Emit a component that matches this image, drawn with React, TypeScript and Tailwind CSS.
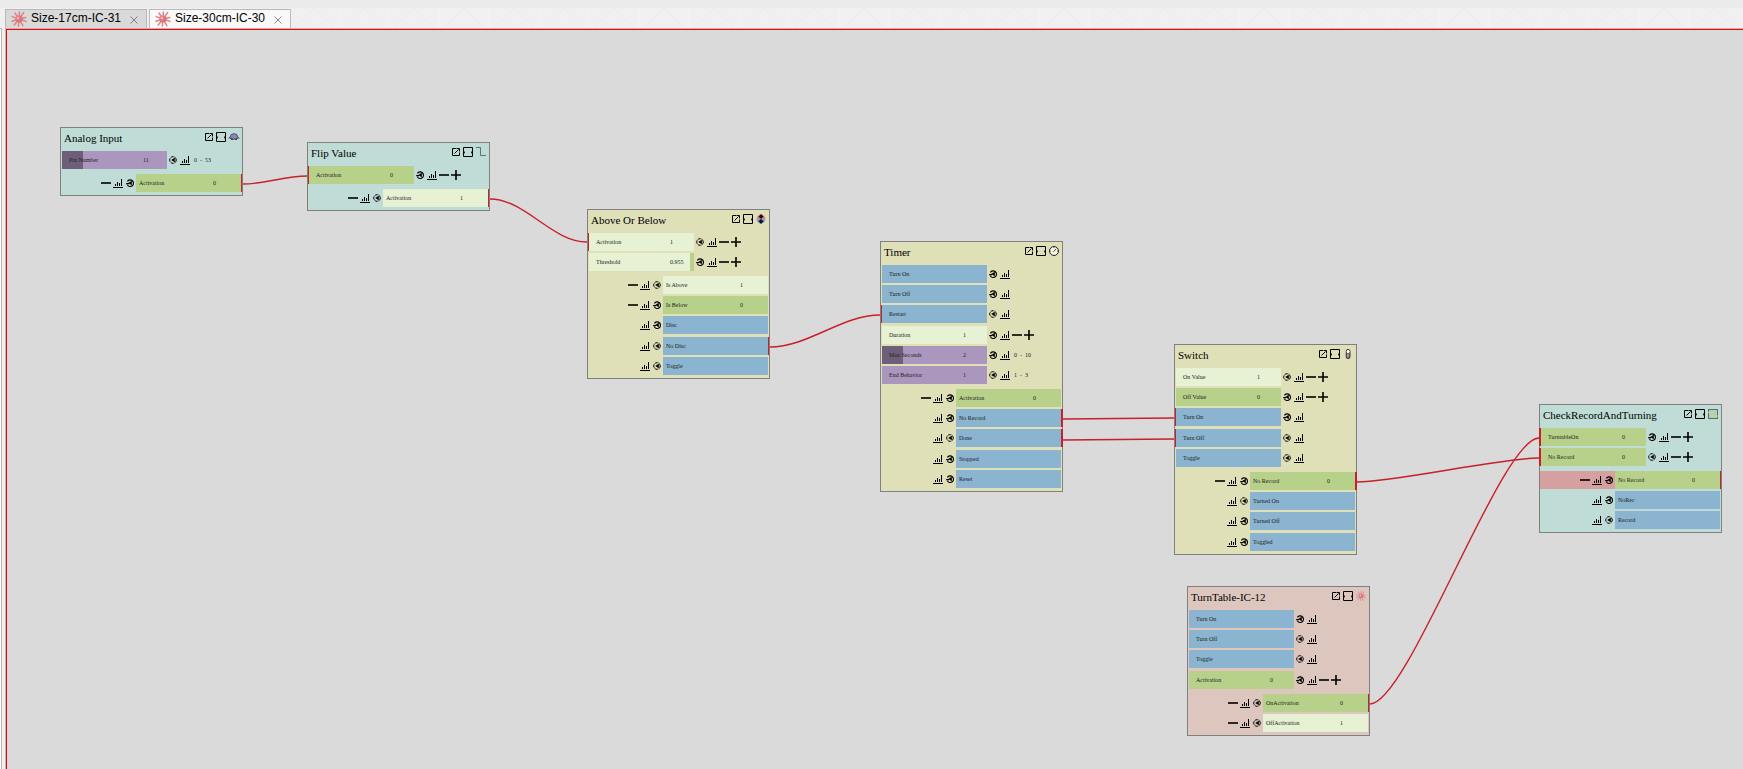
import type { ReactNode } from 'react';
import clsx from 'clsx';

type PortKind = 'off' | 'on' | 'event' | 'setting';

interface Port {
  label: string;
  value?: string;
  kind: PortKind;
  dial?: 'full' | 'half';
  link?: 'thin' | 'thick';
  range?: string;
  fill?: number;
  locked?: boolean;
  notch?: boolean;
}

interface NodeData {
  title: string;
  x: number;
  y: number;
  tone: 'teal' | 'sand' | 'rose';
  badge: ReactNode;
  inputs: Port[];
  outputs: Port[];
}

const toneClass = {
  teal: 'bg-[#bfddd6]',
  sand: 'bg-[#dfdfb8]',
  rose: 'bg-[#dcc6be]',
};

const kindClass: Record<PortKind, string> = {
  off: 'bg-[#b7d18a]',
  on: 'bg-[#e7f2d5]',
  event: 'bg-[#8ab4cf]',
  setting: 'bg-[#ab96bd]',
};

const SpikeIcon = ({ className }: { className: string }) => (
  <svg viewBox="0 0 16 16" className={className} fill="none">
    <g stroke="#dc8488" strokeWidth="1.5" strokeLinecap="round">
      <path d="M8 8 8.4 1M8 8 12.6 1.6M8 8 14.8 6.4M8 8 15 10.4M8 8 11.8 14.6M8 8 7.4 15M8 8 3.2 14M8 8 1 10.2M8 8 1.2 5.6M8 8 4 2" />
    </g>
    <circle cx="8" cy="8" r="3.6" fill="#dd7479" />
    <circle cx="7" cy="7" r="1.5" fill="#f2b5b8" />
  </svg>
);

const SensorBadge = () => (
  <svg viewBox="0 0 12 10" className="h-2.5 w-3 shrink-0" fill="none">
    <path d="M.5 6.5 3 4M11.5 6.5 9 4M1.5 6.5h9" stroke="#5d5878" strokeWidth="1" />
    <ellipse cx="6" cy="4.5" rx="3.6" ry="2.8" fill="#8c86b4" stroke="#4c4862" strokeWidth=".9" />
    <path d="M3 7.4h2M7 7.4h2" stroke="#333" />
  </svg>
);

const StepBadge = () => (
  <svg viewBox="0 0 12 10" className="h-2.5 w-3 shrink-0" fill="none">
    <path d="M1 .5h4.5v8H11" stroke="#5f7370" />
  </svg>
);

const CompareBadge = () => (
  <svg viewBox="0 0 10 10" className="size-2.5">
    <path d="M0.5 5a4.5 4.5 0 0 1 9 0z" fill="#e58c86" />
    <path d="M0.5 5a4.5 4.5 0 0 0 9 0z" fill="#86a6e8" />
    <path d="M5 0 8 3.2H6.3v1.3H3.7V3.2H2zM5 10 8 6.8H6.3V5.5H3.7v1.3H2z" fill="#111" />
  </svg>
);

const ClockBadge = () => (
  <svg viewBox="0 0 10 10" className="size-2.5" fill="none">
    <circle cx="5" cy="5" r="4.5" fill="#f4f4e4" stroke="#222" strokeWidth="1" />
    <path d="M4.4 5.8 7.2 2.8M5 .8v1M9.2 5h-1M.8 5h1" stroke="#222" strokeWidth=".8" />
  </svg>
);

const SwitchBadge = () => (
  <svg viewBox="0 0 10 10" className="size-2.5">
    <rect x="3.2" y=".4" width="3.8" height="9.2" rx="1.9" fill="#777" stroke="#222" strokeWidth=".8" />
    <circle cx="5.1" cy="2.4" r="1.5" fill="#fff" />
    <path d="M5 5v3" stroke="#bbb" />
  </svg>
);

const SheetBadge = () => (
  <svg viewBox="0 0 10 10" className="size-2.5">
    <rect x=".5" y=".5" width="9" height="9" fill="#b4cfb8" stroke="#5e6b68" />
    <path d="M0 3.5h5M5 7h5" stroke="#cfd88e" strokeWidth="1" />
  </svg>
);

const Dial = ({ half }: { half?: boolean }) => (
  <svg viewBox="0 0 8 8" className="size-2" fill="none">
    {half ? (
      <path d="M1.4 2.4A3.3 3.3 0 1 1 1.3 5.8M.2 4.6H3" stroke="#000" strokeWidth="1.1" />
    ) : (
      <circle cx="4" cy="4" r="3.3" stroke="#000" strokeWidth="1" strokeDasharray="3.4 .8" />
    )}
    <path d="M5.8 1.8v4.4L2.2 4z" fill="#000" />
  </svg>
);

const Chart = () => (
  <svg viewBox="0 0 10 9" className="h-[9px] w-2.5" shapeRendering="crispEdges">
    <path d="M0 8h10v1H0zM2 5h1v2H2zM4 3h1v4H4zM6 4h1v3H6zM8 0h1v7H8z" fill="#000" />
  </svg>
);

const Minus = () => (
  <svg viewBox="0 0 10 10" className="size-2.5">
    <path d="M0 4.2h10v1.6H0z" fill="#000" />
  </svg>
);

const Plus = () => (
  <svg viewBox="0 0 10 10" className="size-2.5">
    <path d="M0 4.2h10v1.6H0zM4.2 0h1.6v10H4.2z" fill="#000" />
  </svg>
);

const IconButton = ({ label, children }: { label: string; children: ReactNode }) => (
  <button type="button" aria-label={label} className="flex w-3 items-center justify-center">
    {children}
  </button>
);

const PortBox = ({ port, output }: { port: Port; output?: boolean }) => (
  <div className={clsx('relative flex w-[105px] shrink-0 items-center', kindClass[port.kind], output ? 'pl-[3px]' : 'pl-[7px]')}>
    {port.fill && <div className="absolute inset-y-0 left-0 bg-[#6d5f79]" style={{ width: `${port.fill}%` }} />}
    {port.notch && <div className="absolute inset-y-0 right-0 w-1 bg-[#b7d18a]" />}
    {port.link && (
      <div
        className={clsx(
          'absolute inset-y-0 bg-[#c8202a]',
          port.link === 'thin' && (output ? '-right-px w-px' : '-left-px w-px'),
          port.link === 'thick' && (output ? '-right-0.5 w-0.5' : '-left-0.5 w-0.5'),
        )}
      />
    )}
    <span className="relative w-[74px] whitespace-nowrap">{port.label}</span>
    <span className="relative">{port.value}</span>
  </div>
);

const InputRow = ({ port }: { port: Port }) => (
  <div className="flex h-[18px] pl-px not-last:nth-[3n]:mb-px">
    <PortBox port={port} />
    <div className="flex">
      <IconButton label="Reset"><Dial half={port.dial === 'half'} /></IconButton>
      <IconButton label="Graph"><Chart /></IconButton>
      {port.value && !port.range && (
        <>
          <IconButton label="Decrease"><Minus /></IconButton>
          <IconButton label="Increase"><Plus /></IconButton>
        </>
      )}
    </div>
    {port.range && <span className="self-center pl-[3px] whitespace-pre">{port.range}</span>}
  </div>
);

const OutputRow = ({ port }: { port: Port }) => (
  <div className="flex h-[18px] pr-px not-last:nth-[3n]:mb-px">
    <div className={clsx('flex flex-1 justify-end', port.locked && 'bg-[#d7a0a0]')}>
      {port.value && <IconButton label="Decrease"><Minus /></IconButton>}
      <IconButton label="Graph"><Chart /></IconButton>
      <IconButton label="Reset"><Dial half={port.dial === 'half'} /></IconButton>
    </div>
    <PortBox port={port} output />
  </div>
);

const NodeCard = ({ node }: { node: NodeData }) => (
  <section
    className={clsx('absolute w-[183px] border border-[#808080] pb-[3px] text-[6px] leading-[8px] text-[#222]', toneClass[node.tone])}
    style={{ left: node.x, top: node.y }}
  >
    <header className="flex h-[23px] items-start justify-between pt-[3px] pr-[3px] pl-[3px]">
      <h2 className="text-[11px] leading-[14px] whitespace-nowrap text-black">{node.title}</h2>
      <div className="flex h-3 items-center gap-0.5">
        <button type="button" aria-label="Open">
          <svg viewBox="0 0 8 8" className="size-2" fill="none" stroke="#000">
            <path d="M4 .5H.5v7h7V4.5M2.5 5.5 6.5 1.5M4.5 .5h3v3" />
          </svg>
        </button>
        <button type="button" aria-label="Expand" className="px-px">
          <svg viewBox="0 0 10 10" className="size-2.5" fill="none" stroke="#000">
            <path d="M.5 .5h9v9h-9zM1 4.2v1.6h1M9 4.2v1.6H8" />
          </svg>
        </button>
        <span className="flex w-2.5 justify-center">{node.badge}</span>
      </div>
    </header>
    <div className="flex flex-col gap-[5px]">
      <div className="flex flex-col gap-0.5">
        {node.inputs.map((port) => <InputRow key={port.label} port={port} />)}
      </div>
      <div className="flex flex-col gap-0.5">
        {node.outputs.map((port) => <OutputRow key={port.label} port={port} />)}
      </div>
    </div>
  </section>
);

const nodes: NodeData[] = [
  {
    title: 'Analog Input', x: 53, y: 97, tone: 'teal', badge: <SensorBadge />,
    inputs: [{ label: 'Pin Number', value: '11', kind: 'setting', range: '0  -  53', fill: 20 }],
    outputs: [{ label: 'Activation', value: '0', kind: 'off', dial: 'half', link: 'thin' }],
  },
  {
    title: 'Flip Value', x: 300, y: 112, tone: 'teal', badge: <StepBadge />,
    inputs: [{ label: 'Activation', value: '0', kind: 'off', dial: 'half', link: 'thin' }],
    outputs: [{ label: 'Activation', value: '1', kind: 'on', link: 'thin' }],
  },
  {
    title: 'Above Or Below', x: 580, y: 179, tone: 'sand', badge: <CompareBadge />,
    inputs: [
      { label: 'Activation', value: '1', kind: 'on', link: 'thin' },
      { label: 'Threshold', value: '0.955', kind: 'on', dial: 'half', notch: true },
    ],
    outputs: [
      { label: 'Is Above', value: '1', kind: 'on' },
      { label: 'Is Below', value: '0', kind: 'off', dial: 'half' },
      { label: 'Disc', kind: 'event', dial: 'half' },
      { label: 'No Disc', kind: 'event', link: 'thin' },
      { label: 'Toggle', kind: 'event' },
    ],
  },
  {
    title: 'Timer', x: 873, y: 211, tone: 'sand', badge: <ClockBadge />,
    inputs: [
      { label: 'Turn On', kind: 'event', dial: 'half' },
      { label: 'Turn Off', kind: 'event', dial: 'half' },
      { label: 'Restart', kind: 'event', link: 'thin' },
      { label: 'Duration', value: '1', kind: 'on', dial: 'half' },
      { label: 'Max Seconds', value: '2', kind: 'setting', dial: 'half', range: '0  -  10', fill: 20 },
      { label: 'End Behavior', value: '1', kind: 'setting', range: '1  -  3' },
    ],
    outputs: [
      { label: 'Activation', value: '0', kind: 'off', dial: 'half' },
      { label: 'No Record', kind: 'event', dial: 'half', link: 'thick' },
      { label: 'Done', kind: 'event', link: 'thick' },
      { label: 'Stopped', kind: 'event', dial: 'half' },
      { label: 'Reset', kind: 'event', dial: 'half' },
    ],
  },
  {
    title: 'Switch', x: 1167, y: 314, tone: 'sand', badge: <SwitchBadge />,
    inputs: [
      { label: 'On Value', value: '1', kind: 'on' },
      { label: 'Off Value', value: '0', kind: 'off', dial: 'half' },
      { label: 'Turn On', kind: 'event', dial: 'half', link: 'thin' },
      { label: 'Turn Off', kind: 'event', link: 'thin' },
      { label: 'Toggle', kind: 'event' },
    ],
    outputs: [
      { label: 'No Record', value: '0', kind: 'off', dial: 'half', link: 'thick' },
      { label: 'Turned On', kind: 'event' },
      { label: 'Turned Off', kind: 'event', dial: 'half' },
      { label: 'Toggled', kind: 'event', dial: 'half' },
    ],
  },
  {
    title: 'TurnTable-IC-12', x: 1180, y: 556, tone: 'rose', badge: <SpikeIcon className="size-2.5" />,
    inputs: [
      { label: 'Turn On', kind: 'event', dial: 'half' },
      { label: 'Turn Off', kind: 'event' },
      { label: 'Toggle', kind: 'event' },
      { label: 'Activation', value: '0', kind: 'off', dial: 'half' },
    ],
    outputs: [
      { label: 'OnActivation', value: '0', kind: 'off', link: 'thin' },
      { label: 'OffActivation', value: '1', kind: 'on' },
    ],
  },
  {
    title: 'CheckRecordAndTurning', x: 1532, y: 374, tone: 'teal', badge: <SheetBadge />,
    inputs: [
      { label: 'TurntableOn', value: '0', kind: 'off', dial: 'half', link: 'thick' },
      { label: 'No Record', value: '0', kind: 'off', link: 'thick' },
    ],
    outputs: [
      { label: 'No Record', value: '0', kind: 'off', dial: 'half', link: 'thin', locked: true },
      { label: 'NoRec', kind: 'event', dial: 'half' },
      { label: 'Record', kind: 'event' },
    ],
  },
];

// x1, y1, x2, y2
const wires = [
  [236, 154, 300, 146],
  [483, 169, 580, 212],
  [763, 317, 873, 285],
  [1056, 389, 1167, 388],
  [1056, 410, 1167, 409],
  [1350, 452, 1532, 428],
  [1363, 674, 1532, 408],
];

const wirePath = ([x1, y1, x2, y2]: number[]) => {
  const bend = Math.min((x2 - x1) * 0.36, 38);
  return `M${x1} ${y1}C${x1 + bend} ${y1} ${x2 - bend} ${y2} ${x2} ${y2}`;
};

const Tab = ({ title, active }: { title: string; active?: boolean }) => (
  <div
    className={clsx(
      'flex h-[19px] w-[142px] items-center border border-b-0 border-[#b9b9b9] pl-[5px]',
      active ? 'bg-[#f9f9f9]' : 'bg-[#d9d9d9]',
    )}
  >
    <button type="button" className="flex items-center gap-1 text-[12px] leading-[14px] whitespace-nowrap text-black">
      <SpikeIcon className="size-4" />
      <span className="pb-0.5">{title}</span>
    </button>
    <button type="button" aria-label={`Close ${title}`} className="ml-auto pt-0.5 pr-2">
      <svg viewBox="0 0 8 8" className="size-2" stroke="#777" strokeWidth=".9">
        <path d="M.5 .5 7.5 7.5M7.5 .5 .5 7.5" />
      </svg>
    </button>
  </div>
);

const TabBar = () => (
  <div className="relative bg-[#f0f0f0]">
    <svg className="absolute inset-0 size-full">
      <defs>
        <pattern id="chevrons" width="50" height="20" patternUnits="userSpaceOnUse" x="-6">
          <path d="M0 20 20 0 40 20" fill="none" stroke="#eaeaea" />
          <path d="M45 0v20" stroke="#f3f3f3" />
        </pattern>
      </defs>
      <rect width="100%" height="100%" fill="url(#chevrons)" />
    </svg>
    <nav className="relative flex gap-0.5 pt-px pl-[5px]">
      <Tab title="Size-17cm-IC-31" />
      <Tab title="Size-30cm-IC-30" active />
    </nav>
  </div>
);

export default function App() {
  return (
    <div className="flex h-screen flex-col overflow-hidden bg-[#f0f0f0]">
      <div className="h-2 shrink-0 bg-[#ebebeb]" />
      <div className="font-['Liberation_Sans',sans-serif]">
        <TabBar />
      </div>
      <div className="flex min-h-0 flex-1">
        <div className="mr-[3px] w-0.5 border-t border-r border-[#b9b9b9] bg-white" />
        <div className="flex flex-1 border-t border-l border-[#b9b9b9]">
          <main className="relative flex-1 overflow-hidden border-t border-l border-[#ff0000] bg-[#dadada] font-['Liberation_Serif',serif]">
            {nodes.map((node) => <NodeCard key={node.title} node={node} />)}
            <svg className="pointer-events-none absolute inset-0 size-full" fill="none" stroke="#c8202a" strokeWidth="1.4">
              {wires.map((wire) => <path key={wire.join()} d={wirePath(wire)} />)}
            </svg>
          </main>
        </div>
      </div>
    </div>
  );
}
